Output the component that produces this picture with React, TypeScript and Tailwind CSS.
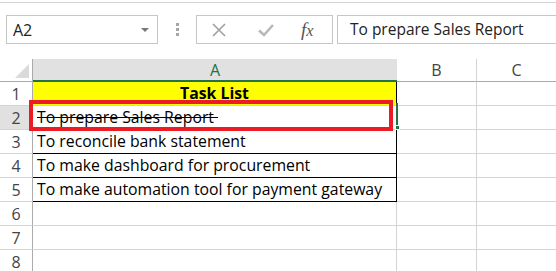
import React from "react";

const rows = [
  { n: "1", text: "Task List" },
  { n: "2", text: "To prepare Sales Report\u00a0" },
  { n: "3", text: "To reconcile bank statement" },
  { n: "4", text: "To make dashboard for procurement" },
  { n: "5", text: "To make automation tool for payment gateway" },
  { n: "6", text: "" },
  { n: "7", text: "" },
  { n: "8", text: "" },
];

export default function App() {
  return (
    <div className="relative w-[556px] h-[271px] overflow-hidden bg-white font-['Open_Sans',sans-serif]">
      {/* formula bar */}
      <div className="h-[57px] border-t border-[#d5d5d5] mt-[2px] flex items-start pt-[12px] pl-[6px]">
        <div className="w-[152px] h-[29px] border border-[#c6c6c6] flex items-center justify-between pl-[6px] pr-[8px] text-[16px] text-[#222]">
          <span>A2</span>
          <span className="w-0 h-0 border-l-[4px] border-r-[4px] border-t-[4px] border-l-transparent border-r-transparent border-t-[#777]" />
        </div>
        <div className="w-[38px] h-[29px] flex flex-col items-center justify-center gap-[2px]">
          <span className="w-[3px] h-[3px] bg-[#a6a6a6]" />
          <span className="w-[3px] h-[3px] bg-[#a6a6a6]" />
          <span className="w-[3px] h-[3px] bg-[#a6a6a6]" />
        </div>
        <div className="w-[137px] h-[29px] border border-[#c6c6c6] flex items-center">
          <svg className="ml-[14px]" width="16" height="16" viewBox="0 0 16 16">
            <path d="M2 2 L14 14 M14 2 L2 14" stroke="#a0a0a0" strokeWidth="1.6" fill="none" />
          </svg>
          <svg className="ml-[30px]" width="18" height="16" viewBox="0 0 18 16">
            <path d="M2 8.5 L7 13 L16 3" stroke="#b8b8b8" strokeWidth="2.6" fill="none" />
          </svg>
          <span className="ml-[26px] font-['Liberation_Serif',serif] italic text-[19px] text-[#555] leading-none">
            f<span className="text-[16px]">x</span>
          </span>
        </div>
        <div className="ml-[4px] flex-1 h-[29px] border border-r-0 border-[#c6c6c6] flex items-center pl-[12px] text-[15.5px] text-[#222]">
          To prepare Sales Report
        </div>
      </div>

      {/* column headers */}
      <div className="flex h-[23px] text-[16px] text-[#444]">
        <div className="w-[33px] bg-white border-b border-r border-[#ababab] flex items-end justify-end pr-[3px] pb-[3px]">
          <svg width="14" height="14" viewBox="0 0 14 14">
            <path d="M14 0 L14 14 L0 14 Z" fill="#dadada" />
          </svg>
        </div>
        <div className="w-[364px] bg-[#e1e1e1] border-b-2 border-[#217346] flex items-center justify-center text-[#217346]">A</div>
        <div className="w-[80px] border-b border-r border-[#ababab] border-r-[#d4d4d4] flex items-center justify-center">B</div>
        <div className="flex-1 border-b border-[#ababab] flex items-center justify-center">C</div>
      </div>

      {/* rows */}
      {rows.map((r, i) => {
        const boxed = i <= 4;
        return (
          <div key={r.n} className="flex h-[24px] font-['Open_Sans',sans-serif]">
            <div
              className={`w-[33px] border-r border-b border-[#d4d4d4] border-r-[#ababab] flex items-center justify-center text-[16px] text-[#444] ${i === 1 ? "bg-[#e1e1e1]" : "bg-white"}`}
            >
              {r.n}
            </div>
            <div
              className={`w-[364px] border-r ${boxed ? "border-r-black" : "border-r-[#d4d4d4]"} ${i >= 2 && i <= 4 ? "border-b border-b-black" : "border-b border-b-[#d4d4d4]"} ${i === 0 ? "bg-[#ffff00] justify-center font-bold" : "pl-[4px]"} flex items-center text-[15.8px] text-black whitespace-nowrap`}
            >
              {i === 1 ? <span className="line-through">{r.text}</span> : r.text}
            </div>
            <div className="w-[80px] border-r border-b border-[#d4d4d4]" />
            <div className="flex-1 border-b border-[#d4d4d4]" />
          </div>
        );
      })}

      {/* selection on A2 */}
      <div className="absolute left-[396px] top-[103px] w-[2px] h-[25px] bg-[#217346]" />
      <div className="absolute left-[395px] top-[125px] w-[5px] h-[5px] bg-[#217346] border border-white" />

      {/* red annotation box */}
      <div className="absolute left-[29px] top-[100px] w-[364px] h-[31px] border-[4px] border-[#ed1c24]" />
    </div>
  );
}
